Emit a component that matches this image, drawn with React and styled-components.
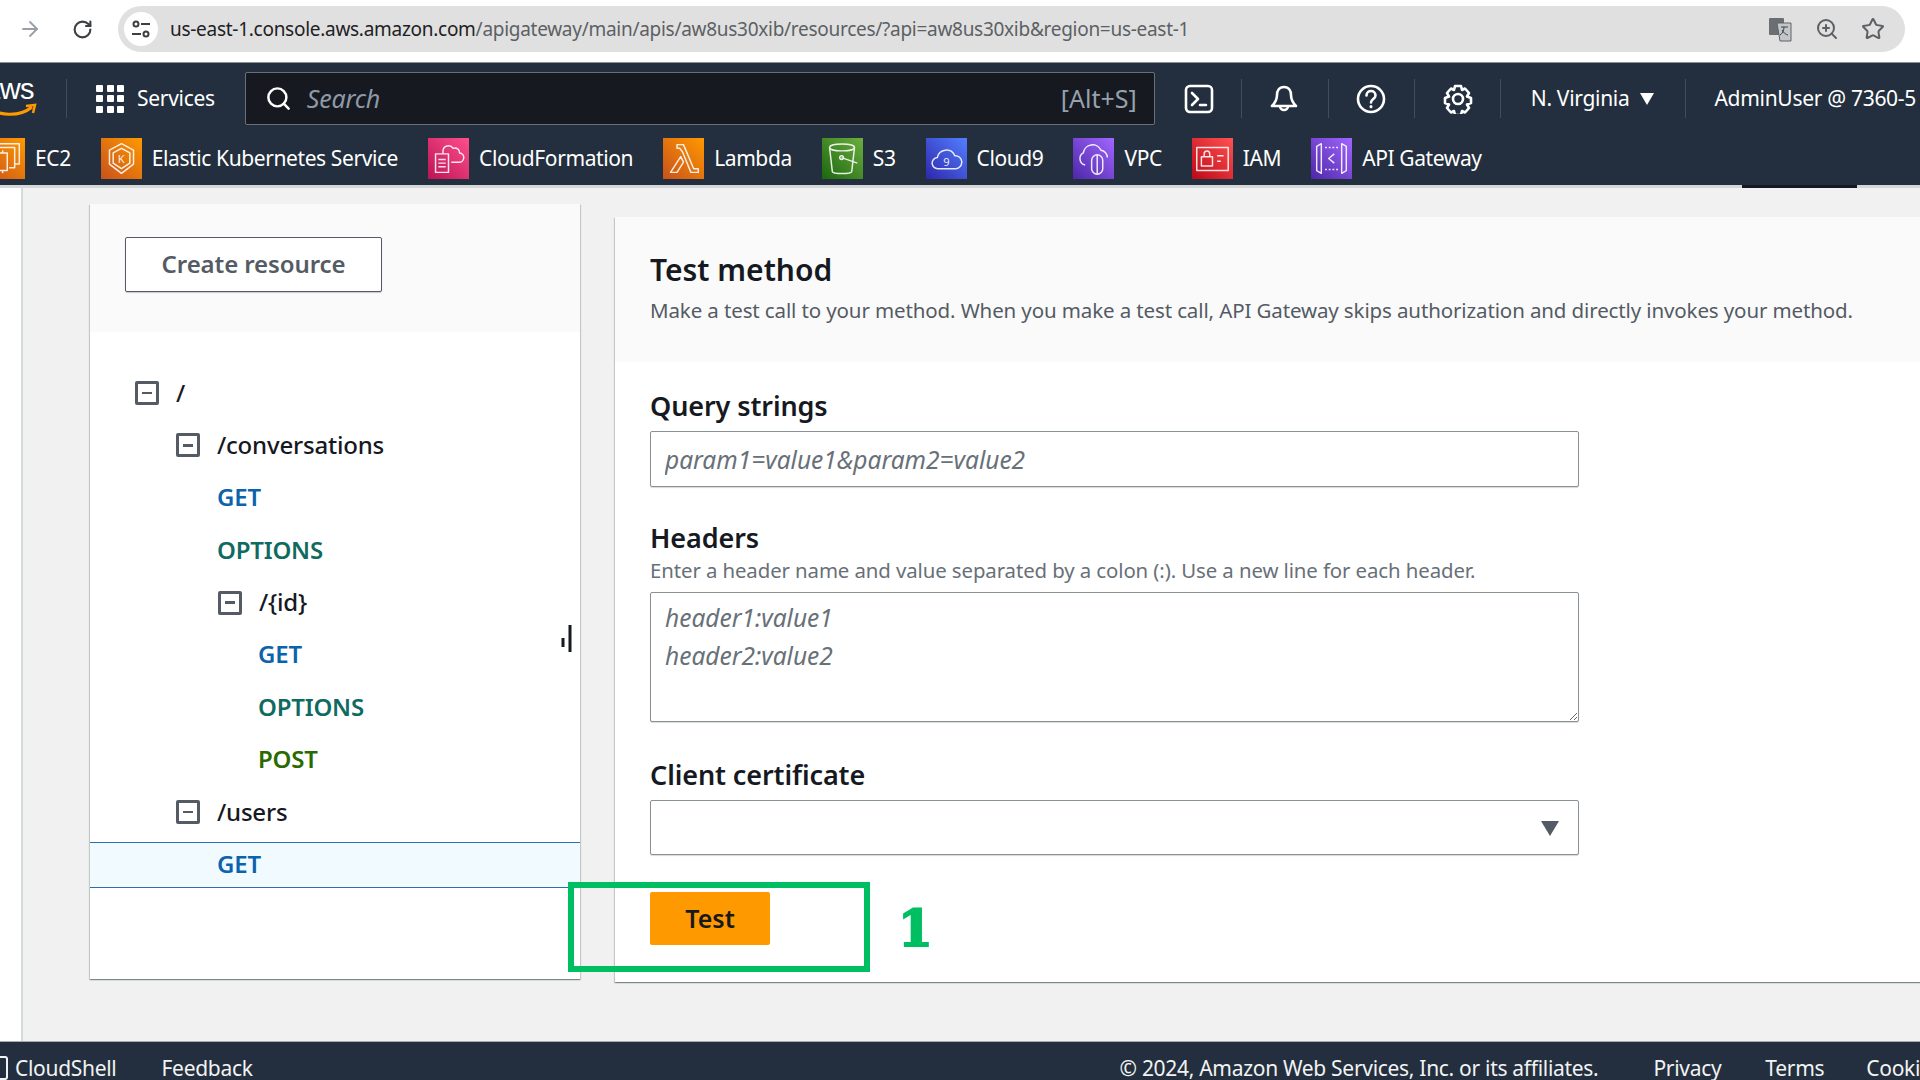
import React from 'react';
import styled, { createGlobalStyle } from 'styled-components';
import { ArrowRight, RotateCw, ZoomIn, Star, Search } from 'lucide-react';

const Global = createGlobalStyle`
  html, body { margin: 0; padding: 0; background: #fff; }
  * { box-sizing: border-box; }
  body { font-family: "Noto Sans", "Open Sans", sans-serif; overflow: hidden; }
`;

const Page = styled.div`
  width: 1920px; height: 1080px; overflow: hidden;
  display: flex; flex-direction: column; background: #fff;
`;

/* browser chrome */
const BrowserBar = styled.div`
  height: 63px; flex: none; display: flex; align-items: center; background: #fff;
  padding: 0 15px 4px 18px; border-bottom: 1px solid #8b8f94;
`;
const ChromeBtn = styled.div`
  width: 24px; height: 28px; display: flex; align-items: center; justify-content: center;
  margin-right: ${p => p.$mr}px; color: ${p => p.$color};
`;
const Omnibox = styled.div`
  flex: 1; height: 46px; border-radius: 23px; background: #e0e0e0;
  display: flex; align-items: center; padding: 0 20px 0 6px;
`;
const SiteBadge = styled.div`
  width: 34px; height: 34px; border-radius: 50%; background: #fff; flex: none;
  display: flex; align-items: center; justify-content: center; margin-right: 12px;
`;
const Url = styled.div`
  flex: 1; font-size: 19px; letter-spacing: -0.28px; color: #5c6064; white-space: nowrap;
  b { font-weight: 400; color: #202124; }
`;
const OmniIcons = styled.div`
  display: flex; align-items: center; gap: 22px; color: #5c6064;
`;

/* aws nav */
const Nav = styled.div`
  flex: none; background: #232f3e; color: #fff;
`;
const NavTop = styled.div`
  height: 71px; display: flex; align-items: center;
`;
const Logo = styled.div`
  width: 40px; margin-left: -16px; margin-right: 42px; height: 44px; position: relative; flex: none;
  font-family: "Liberation Sans", sans-serif; font-size: 29px; line-height: 32px; font-weight: 400;
  letter-spacing: -0.5px; text-align: right; white-space: nowrap; padding-right: 4px; margin-top: -8px;
  svg { position: absolute; left: 0; bottom: 0; }
`;
const Sep = styled.div`
  width: 1px; height: 39px; background: #414d5c; flex: none;
  margin-left: ${p => p.$ml || 0}px; margin-right: ${p => p.$mr || 0}px;
`;
const GridIcon = styled.div`
  display: grid; grid-template-columns: repeat(3, 7px); grid-auto-rows: 7px; gap: 3.5px;
  margin-left: 29px; margin-right: 13px; flex: none;
  i { display: block; background: #fff; border-radius: 1px; }
`;
const NavText = styled.div`
  font-size: 21px; color: #fff; white-space: nowrap; flex: none; letter-spacing: -0.3px;
  margin-left: ${p => p.$ml || 0}px; padding-bottom: 2px;
`;
const SearchBox = styled.div`
  width: 910px; height: 53px; flex: none; margin-left: 30px; background: #16191f;
  border: 1px solid #687078; border-radius: 2px; display: flex; align-items: center;
  padding: 0 17px 0 19px; font-size: 25px; color: #95a5a6;
`;
const SearchWord = styled.span`
  flex: 1; font-style: italic; margin-left: 15px; color: #8d99a8; letter-spacing: -0.2px; padding-bottom: 2px;
`;
const Shortcut = styled.span`
  color: #95a1ad; padding-bottom: 2px;
`;
const NavIcon = styled.svg`
  width: 30px; height: 30px; flex: none; display: block;
  margin-left: ${p => p.$ml}px; margin-right: ${p => p.$mr}px;
`;
const Caret = styled.div`
  width: 0; height: 0; flex: none; margin-left: 11px;
  border-left: 7.5px solid transparent; border-right: 7.5px solid transparent; border-top: 12px solid #fff;
`;
const NavBottom = styled.div`
  height: 51px; display: flex; align-items: flex-start; padding-top: 4px; margin-left: -16px; gap: 30px;
`;
const Fav = styled.div`
  display: flex; align-items: center; gap: 10px; height: 41px; flex: none;
  font-size: 21px; color: #fff; letter-spacing: -0.4px; white-space: nowrap;
`;
const FavName = styled.span`
  padding-bottom: 2px;
`;
const Tile = styled.div`
  width: 41px; height: 41px; flex: none; display: flex; align-items: center; justify-content: center;
  background: linear-gradient(45deg, ${p => p.$from}, ${p => p.$to});
  svg { width: 37px; height: 37px; display: block; fill: none; stroke: #fff; stroke-width: 1.6; stroke-linejoin: round; opacity: .88; }
  svg text { fill: #fff; stroke: none; font-family: "Noto Sans", sans-serif; }
`;
const UnderNav = styled.div`
  height: 3px; flex: none; background: #d5d8d9; padding-left: 1742px;
  i { display: block; width: 115px; height: 3px; background: #16191f; }
`;

/* page */
const Main = styled.div`
  flex: 1; min-height: 0; display: flex; position: relative; background: #f1f1f1;
`;
const Strip = styled.div`
  width: 23px; flex: none; background: #fff; border-right: 2px solid #d5dbdb;
`;
const Panel = styled.section`
  flex: none; background: #fff; display: flex; flex-direction: column;
  box-shadow: 0 1px 1px 0 rgba(0,28,36,.3), 1px 1px 1px 0 rgba(0,28,36,.15), -1px 1px 1px 0 rgba(0,28,36,.15);
`;
const TreePanel = styled(Panel)`
  width: 490px; height: 775px; margin: 16px 0 0 67px;
`;
const PanelHead = styled.div`
  background: #fafafa; flex: none;
`;
const TreeHead = styled(PanelHead)`
  height: 128px; padding: 33px 0 0 35px;
`;
const GhostBtn = styled.div`
  width: 257px; height: 55px; background: #fff; border: 1.5px solid #545b64; border-radius: 2px;
  display: flex; align-items: center; justify-content: center; box-shadow: 0 1px 1px rgba(0,0,0,.2);
  font-size: 24px; font-weight: 600; color: #545b64; letter-spacing: -0.1px; padding-bottom: 2px;
`;
const Tree = styled.div`
  display: grid; grid-auto-rows: 46px; row-gap: 6.4px; padding-top: 38px;
`;
const Row = styled.div`
  display: flex; align-items: center; gap: 17px; padding-left: ${p => p.$indent}px;
  font-size: 24px; letter-spacing: -0.2px; font-weight: ${p => (p.$color ? 600 : 500)};
  color: ${p => p.$color || '#16191f'};
  ${p => p.$selected && 'background: #f1faff; border-top: 1.5px solid #2a6fa8; border-bottom: 1.5px solid #2a6fa8;'}
`;
const RowText = styled.span`
  padding-bottom: 2px;
`;
const MinusBox = styled.div`
  width: 24px; height: 24px; flex: none; border: 3px solid #545b64; border-radius: 2px;
  display: flex; align-items: center; justify-content: center;
  i { display: block; width: 10px; height: 2.5px; background: #545b64; }
`;
const TestPanel = styled(Panel)`
  width: 1400px; height: 765px; margin: 29px 0 0 35px;
`;
const TestHead = styled(PanelHead)`
  height: 145px; padding: 36px 0 0 35px;
`;
const Title = styled.h2`
  margin: 0; font-size: 30px; line-height: 34px; font-weight: 600; color: #16191f;
`;
const Lead = styled.p`
  margin: 8px 0 0; font-size: 20.5px; line-height: 30px; color: #545b64; white-space: nowrap; letter-spacing: -0.12px;
`;
const Form = styled.div`
  display: flex; flex-direction: column; align-items: flex-start; padding: 30px 0 0 35px;
`;
const Label = styled.div`
  font-size: 27px; line-height: 28px; margin-bottom: 2px; font-weight: 600; color: #16191f; letter-spacing: -0.1px;
  margin-top: ${p => p.$mt || 0}px;
`;
const Hint = styled.div`
  font-size: 20.4px; line-height: 26px; color: #687078; margin-top: 3px; margin-bottom: 1px; letter-spacing: -0.1px; white-space: nowrap;
`;
const fieldCss = `
  display: block; width: 929px; background: #fff; border: 1px solid #879196; border-radius: 2px;
  font-family: "Noto Sans", sans-serif; font-size: 24.5px; font-style: italic; color: #16191f;
  outline: none; margin: 0;
  &::placeholder { color: #687078; opacity: 1; }
`;
const TextInput = styled.input`
  ${fieldCss}
  height: 56px; margin-top: 9px; padding: 0 14px; box-shadow: 0 1px 1px rgba(0,0,0,.15);
`;
const TextArea = styled.textarea`
  ${fieldCss}
  height: 130px; margin-top: 8px; padding: 6px 14px; line-height: 38px; resize: vertical; box-shadow: 0 1px 1px rgba(0,0,0,.15);
`;
const SelectWrap = styled.div`
  position: relative; width: 929px; height: 55px; margin-top: 9px;
`;
const Select = styled.select`
  ${fieldCss}
  height: 55px; appearance: none; padding: 0 14px; box-shadow: 0 1px 1px rgba(0,0,0,.15);
`;
const SelectCaret = styled.div`
  position: absolute; right: 20px; top: 21px; width: 0; height: 0; pointer-events: none;
  border-left: 9px solid transparent; border-right: 9px solid transparent; border-top: 15px solid #545b64;
`;
const TestBtn = styled.div`
  width: 120px; height: 53px; margin-top: 37px; background: #ff9900; border-radius: 2px;
  display: flex; align-items: center; justify-content: center;
  font-size: 25px; font-weight: 600; color: #16191f; padding-bottom: 2px;
`;

/* annotation overlays */
const Callout = styled.div`
  position: absolute; left: 568px; top: 694px; width: 302px; height: 90px; border: 6px solid #00bf63;
`;
const CalloutNum = styled.div`
  position: absolute; left: 898px; top: 711px; font-family: "DejaVu Serif", serif; font-weight: 700;
  font-size: 50px; line-height: 60px; color: #00bf63; -webkit-text-stroke: 2px #00bf63;
`;
const Cursor = styled.svg`
  position: absolute; left: 560px; top: 437px; width: 14px; height: 27px;
`;

/* footer */
const Footer = styled.div`
  height: 39px; flex: none; background: #232f3e; border-top: 1px solid #a8adb2; color: #f2f3f3;
  display: flex; align-items: flex-start; padding-top: 14px; font-size: 21px; letter-spacing: -0.3px; line-height: 24px; white-space: nowrap;
`;
const FootItem = styled.span`
  flex: none; margin-left: ${p => p.$ml}px;
`;
const ShellGlyph = styled.div`
  flex: none; width: 12px; height: 24px; margin-left: -4px; border: 2px solid #f2f3f3; border-radius: 3px;
`;

const terminal = (
  <NavIcon $ml={29} $mr={27} viewBox="0 0 30 30" fill="none" stroke="#fff" strokeWidth="2.6">
    <rect x="2" y="2" width="26" height="26" rx="4" />
    <path d="M8 9l6 6-6 6M16 21h6" strokeLinecap="round" strokeLinejoin="round" />
  </NavIcon>
);
const bell = (
  <NavIcon $ml={27} $mr={29} viewBox="0 0 30 30" fill="none" stroke="#fff" strokeWidth="2.6" strokeLinejoin="round">
    <path d="M15 3c-5 0-7 4-7 8 0 5-2 8-5 11h24c-3-3-5-6-5-11 0-4-2-8-7-8z" />
    <path d="M11 22a4 4 0 0 0 8 0" />
  </NavIcon>
);
const help = (
  <NavIcon $ml={27} $mr={28} viewBox="0 0 30 30" fill="none" stroke="#fff" strokeWidth="2.6" strokeLinecap="round">
    <circle cx="15" cy="15" r="13" />
    <path d="M10.5 11.5c0-6 9-6 9 0 0 3.500-4.500 3.500-4.500 7" />
    <path d="M15 22.500v.2" strokeWidth="3" />
  </NavIcon>
);
const gear = (
  <NavIcon $ml={28} $mr={27} viewBox="0 0 30 30" fill="none" stroke="#fff" strokeWidth="2.6" strokeLinejoin="round">
    <path d="M12 2h6l1 4 3-1.500 4 4.500-2 3.500 4 1.500v5l-4 1.500 2 3.500-4 4.500-3-1.500-1 4h-6l-1-4-3 1.500-4-4.500 2-3.500-4-1.500v-5l4-1.500-2-3.500 4-4.500 3 1.500z" />
    <circle cx="15" cy="15" r="5" />
  </NavIcon>
);

const ec2 = (
  <svg viewBox="0 0 40 40">
    <path d="M14 8V4h22v22h-5" />
    <path d="M9 12V8h22v22h-6" />
    <rect x="4" y="14" width="19" height="19" />
    <path d="M8 14v-3M13 14v-3M18 14v-3M8 33v3M13 33v3M18 33v3M4 19H1M4 27H1" />
  </svg>
);
const eks = (
  <svg viewBox="0 0 40 40">
    <path d="M20 4l13 7v15l-13 10L7 26V11z" />
    <path d="M20 9l9 5v11l-9 6-9-6V14z" />
    <text x="16" y="25" fontSize="12">K</text>
  </svg>
);
const cf = (
  <svg viewBox="0 0 40 40">
    <path d="M6 15h14v20H6z" />
    <path d="M9 21h8M9 25h8M9 29h8" />
    <path d="M14 15v-3a6 6 0 0 1 11-3 5 5 0 0 1 7 5 5 5 0 0 1-1 10h-8" />
  </svg>
);
const lambda = (
  <svg viewBox="0 0 40 40">
    <path d="M13 5h7l11 26h5v4h-8L19 13l-3-4h-3zM17 18l3 6-7 11H6z" />
  </svg>
);
const s3 = (
  <svg viewBox="0 0 40 40">
    <path d="M6 8c0-5 27-5 27 0l-3 26c-1 3-20 3-21 0z" />
    <path d="M6 8c0 5 27 5 27 0" />
    <path d="M19 19l17 6" />
    <circle cx="19" cy="19" r="2" />
  </svg>
);
const c9 = (
  <svg viewBox="0 0 40 40">
    <path d="M11 31a6 6 0 0 1-1-12 10 10 0 0 1 19-2 7 7 0 0 1 1 14z" />
    <text x="16.500" y="28" fontSize="12">9</text>
  </svg>
);
const vpc = (
  <svg viewBox="0 0 40 40">
    <path d="M11 27a7 7 0 0 1-2-13 10 10 0 0 1 19-3 8 8 0 0 1 7 8" />
    <path d="M18 22a6 6 0 0 1 12 0v9a6 6 0 0 1-12 0z" />
    <path d="M24 16v21" />
  </svg>
);
const iam = (
  <svg viewBox="0 0 40 40">
    <rect x="3" y="8" width="34" height="25" />
    <rect x="8" y="18" width="12" height="10" />
    <path d="M11 18v-3a3 3 0 0 1 6 0v3M25 17h7M25 23h4" />
  </svg>
);
const apigw = (
  <svg viewBox="0 0 40 40">
    <path d="M9 4l-5 3v26l5 3zM31 4l5 3v26l-5 3z" />
    <path d="M13 8h14M13 32h14" strokeDasharray="2 2" />
    <path d="M23 15l-6 5 6 5" />
  </svg>
);

const favs = [
  ['EC2', '#c8511b', '#ff9900', ec2],
  ['Elastic Kubernetes Service', '#c8511b', '#ff9900', eks],
  ['CloudFormation', '#bc1356', '#ff4f8b', cf],
  ['Lambda', '#c8511b', '#ff9900', lambda],
  ['S3', '#1b660f', '#6cae3e', s3],
  ['Cloud9', '#2e27ad', '#527fff', c9],
  ['VPC', '#4d27a8', '#a166ff', vpc],
  ['IAM', '#bd0816', '#ff5252', iam],
  ['API Gateway', '#4d27a8', '#a166ff', apigw],
];

const tree = [
  { t: '/', i: 45, box: true },
  { t: '/conversations', i: 86, box: true },
  { t: 'GET', i: 127, c: '#0b62ad' },
  { t: 'OPTIONS', i: 127, c: '#0f6b5f' },
  { t: '/{id}', i: 128, box: true },
  { t: 'GET', i: 168, c: '#0b62ad' },
  { t: 'OPTIONS', i: 168, c: '#0f6b5f' },
  { t: 'POST', i: 168, c: '#2b6a00' },
  { t: '/users', i: 86, box: true },
  { t: 'GET', i: 127, c: '#0b62ad', sel: true },
];

export default function App() {
  return (
    <Page>
      <Global />
      <BrowserBar>
        <ChromeBtn $mr={28} $color="#9aa0a6"><ArrowRight size={24} strokeWidth={1.8} /></ChromeBtn>
        <ChromeBtn $mr={24} $color="#3c4043"><RotateCw size={21} strokeWidth={2.4} /></ChromeBtn>
        <Omnibox>
          <SiteBadge>
            <svg width="20" height="20" viewBox="0 0 20 20" fill="none" stroke="#3c4043" strokeWidth="2">
              <circle cx="5" cy="5" r="2.500" /><path d="M10 5h9M1 15h9" /><circle cx="15" cy="15" r="2.500" />
            </svg>
          </SiteBadge>
          <Url><b>us-east-1.console.aws.amazon.com</b>/apigateway/main/apis/aw8us30xib/resources/?api=aw8us30xib&amp;region=us-east-1</Url>
          <OmniIcons>
            <svg width="25" height="25" viewBox="0 0 25 25">
              <rect x="1" y="1" width="15" height="17" rx="1" fill="#6b6f73" />
              <path d="M9 6h14v18H12z" fill="#c4c7c9" stroke="#5f6368" />
              <path d="M13 10h7M16 10c0 4-2 7-4 8M14 13c1 2 4 5 6 5" stroke="#3c4043" fill="none" />
            </svg>
            <ZoomIn size={24} strokeWidth={2} />
            <Star size={24} strokeWidth={2} />
          </OmniIcons>
        </Omnibox>
      </BrowserBar>

      <Nav>
        <NavTop>
          <Logo>
            aws
            <svg width="56" height="14" viewBox="0 0 56 14" fill="none">
              <path d="M0 2C14 14 36 14 48 4" stroke="#ff9900" strokeWidth="3" />
              <path d="M42 3l9-1-2 8" stroke="#ff9900" strokeWidth="2.500" />
            </svg>
          </Logo>
          <Sep />
          <GridIcon>{Array.from({ length: 9 }, (_, i) => <i key={i} />)}</GridIcon>
          <NavText>Services</NavText>
          <SearchBox>
            <Search size={27} color="#fff" strokeWidth={2.2} />
            <SearchWord>Search</SearchWord>
            <Shortcut>[Alt+S]</Shortcut>
          </SearchBox>
          {terminal}
          <Sep />
          {bell}
          <Sep />
          {help}
          <Sep />
          {gear}
          <Sep />
          <NavText $ml={30}>N. Virginia</NavText>
          <Caret />
          <Sep $ml={31} />
          <NavText $ml={28}>AdminUser @ 7360-5</NavText>
        </NavTop>
        <NavBottom>
          {favs.map(([name, from, to, icon]) => (
            <Fav key={name}>
              <Tile $from={from} $to={to}>{icon}</Tile>
              <FavName>{name}</FavName>
            </Fav>
          ))}
        </NavBottom>
      </Nav>
      <UnderNav><i /></UnderNav>

      <Main>
        <Strip />
        <TreePanel>
          <TreeHead><GhostBtn>Create resource</GhostBtn></TreeHead>
          <Tree>
            {tree.map((r, i) => (
              <Row key={i} $indent={r.i} $color={r.c} $selected={r.sel}>
                {r.box && <MinusBox><i /></MinusBox>}
                <RowText>{r.t}</RowText>
              </Row>
            ))}
          </Tree>
        </TreePanel>
        <TestPanel>
          <TestHead>
            <Title>Test method</Title>
            <Lead>Make a test call to your method. When you make a test call, API Gateway skips authorization and directly invokes your method.</Lead>
          </TestHead>
          <Form>
            <Label>Query strings</Label>
            <TextInput placeholder="param1=value1&param2=value2" readOnly />
            <Label $mt={37}>Headers</Label>
            <Hint>Enter a header name and value separated by a colon (:). Use a new line for each header.</Hint>
            <TextArea placeholder={'header1:value1\nheader2:value2'} readOnly />
            <Label $mt={39}>Client certificate</Label>
            <SelectWrap>
              <Select><option></option></Select>
              <SelectCaret />
            </SelectWrap>
            <TestBtn>Test</TestBtn>
          </Form>
        </TestPanel>
        <Callout />
        <CalloutNum>1</CalloutNum>
        <Cursor viewBox="0 0 14 27">
          <path d="M10 0v27M3 13v9" stroke="#16191f" strokeWidth="3" fill="none" />
        </Cursor>
      </Main>

      <Footer>
        <ShellGlyph />
        <FootItem $ml={7}>CloudShell</FootItem>
        <FootItem $ml={45}>Feedback</FootItem>
        <FootItem $ml={867}>© 2024, Amazon Web Services, Inc. or its affiliates.</FootItem>
        <FootItem $ml={55}>Privacy</FootItem>
        <FootItem $ml={44}>Terms</FootItem>
        <FootItem $ml={42}>Cookie preferences</FootItem>
      </Footer>
    </Page>
  );
}
